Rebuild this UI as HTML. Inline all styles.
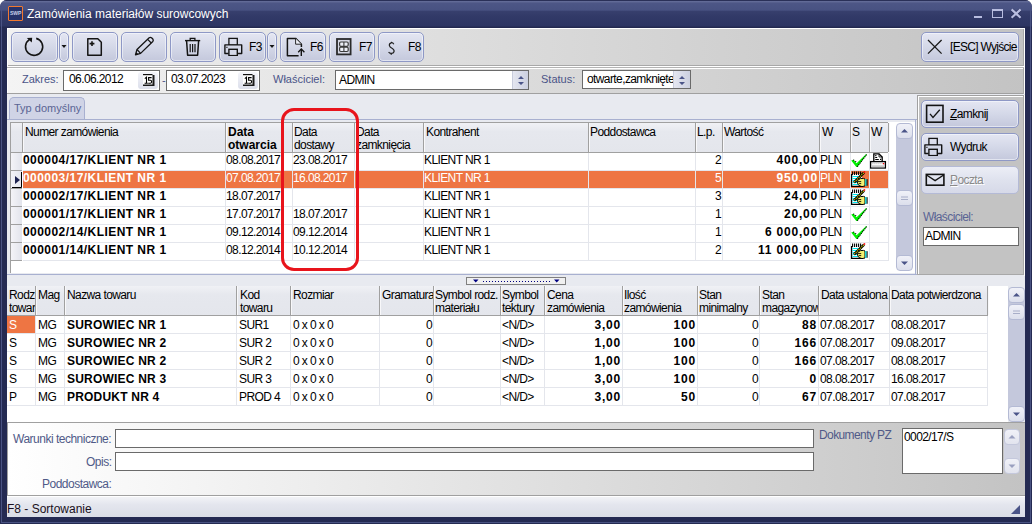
<!DOCTYPE html>
<html><head><meta charset="utf-8"><style>
html,body{margin:0;padding:0;}
body{width:1032px;height:524px;position:relative;overflow:hidden;background:#ffffff;font-family:"Liberation Sans", sans-serif;}
body div, body svg{position:absolute;}
.t{white-space:nowrap;color:#000;font-size:11px;line-height:13px;}
</style></head><body>
<div style="left:0;top:0;width:1032px;height:524px;background:#242a52;border-radius:7px 7px 0 0;"></div>
<div style="left:0;top:0;width:1032px;height:28px;border-radius:7px 7px 0 0;background:linear-gradient(#2a3058 0px,#2a3058 1px,#646d9a 1px,#5f6894 2px,#4d5686 3px,#485282 10px,#373f6d 11.5px,#323a68 16px,#2d3563 26px,#232950 27px,#232950 28px);"></div>
<div style="left:1px;top:6px;width:1px;height:517px;background:#4a5382"></div>
<div style="left:1030px;top:6px;width:1px;height:517px;background:#4a5382"></div>
<div style="left:1px;top:522px;width:1030px;height:1px;background:#4a5382"></div>
<div style="left:8px;top:6px;width:13px;height:13px;border:1.5px solid #f07830;border-radius:1px;background:#26326a;"></div>
<div class="t" style="left:10px;top:11px;font-size:5px;line-height:5px;color:#c8d0e8;font-weight:bold;letter-spacing:0;">SWP</div>
<div class="t" style="left:27px;top:6px;font-size:12px;line-height:16px;color:#ffffff;">Zamówienia materiałów surowcowych</div>
<div style="left:974px;top:16px;width:8px;height:2px;background:#b8bde0"></div>
<div style="left:992px;top:9px;width:11px;height:9px;border:1px solid #b8bde0;border-top-width:2px;box-sizing:border-box;"></div>
<svg style="position:absolute;left:1009px;top:7px" width="14" height="13"><path d="M2.6 2.4 L11.6 10.8 M11.6 2.4 L2.6 10.8" stroke="#1c2048" stroke-width="3.4" stroke-opacity="0.5"/><path d="M2.6 2.4 L11.6 10.8 M11.6 2.4 L2.6 10.8" stroke="#b8bde0" stroke-width="2.2"/></svg>
<div style="left:7px;top:28px;width:1018px;height:489px;background:#e8eaf0"></div>
<div style="left:7px;top:28px;width:1018px;height:38px;background:linear-gradient(90deg,#f2f2f2,#c3c3c3);"></div>
<div style="left:7px;top:28px;width:1018px;height:1px;background:#ffffff"></div>
<div style="left:7px;top:65px;width:1018px;height:1px;background:#a8a8a8"></div>
<div style="left:7px;top:66px;width:1018px;height:1px;background:#ffffff"></div>
<div style="left:1024px;top:28px;width:1px;height:39px;background:#ffffff"></div>
<div style="left:7px;top:28px;width:1px;height:38px;background:#ffffff"></div>
<div style="left:1023px;top:29px;width:1px;height:37px;background:#a8a8a8"></div>
<div style="left:11px;top:32px;width:47px;height:30px;box-sizing:border-box;border:1px solid #8e98c6;border-radius:5px;box-shadow:inset 0 0 0 1px rgba(250,251,255,0.55);background:linear-gradient(#e4e6f2,#d4d8e8 50%,#c4c8dc);"></div>
<div style="left:59px;top:32px;width:10px;height:30px;box-sizing:border-box;border:1px solid #8e98c6;border-radius:5px;box-shadow:inset 0 0 0 1px rgba(250,251,255,0.55);background:linear-gradient(#e4e6f2,#d4d8e8 50%,#c4c8dc);"></div>
<div style="left:72px;top:32px;width:46px;height:30px;box-sizing:border-box;border:1px solid #8e98c6;border-radius:5px;box-shadow:inset 0 0 0 1px rgba(250,251,255,0.55);background:linear-gradient(#e4e6f2,#d4d8e8 50%,#c4c8dc);"></div>
<div style="left:121px;top:32px;width:46px;height:30px;box-sizing:border-box;border:1px solid #8e98c6;border-radius:5px;box-shadow:inset 0 0 0 1px rgba(250,251,255,0.55);background:linear-gradient(#e4e6f2,#d4d8e8 50%,#c4c8dc);"></div>
<div style="left:170px;top:32px;width:46px;height:30px;box-sizing:border-box;border:1px solid #8e98c6;border-radius:5px;box-shadow:inset 0 0 0 1px rgba(250,251,255,0.55);background:linear-gradient(#e4e6f2,#d4d8e8 50%,#c4c8dc);"></div>
<div style="left:219px;top:32px;width:47px;height:30px;box-sizing:border-box;border:1px solid #8e98c6;border-radius:5px;box-shadow:inset 0 0 0 1px rgba(250,251,255,0.55);background:linear-gradient(#e4e6f2,#d4d8e8 50%,#c4c8dc);"></div>
<div style="left:267px;top:32px;width:10px;height:30px;box-sizing:border-box;border:1px solid #8e98c6;border-radius:5px;box-shadow:inset 0 0 0 1px rgba(250,251,255,0.55);background:linear-gradient(#e4e6f2,#d4d8e8 50%,#c4c8dc);"></div>
<div style="left:280px;top:32px;width:46px;height:30px;box-sizing:border-box;border:1px solid #8e98c6;border-radius:5px;box-shadow:inset 0 0 0 1px rgba(250,251,255,0.55);background:linear-gradient(#e4e6f2,#d4d8e8 50%,#c4c8dc);"></div>
<div style="left:329px;top:32px;width:46px;height:30px;box-sizing:border-box;border:1px solid #8e98c6;border-radius:5px;box-shadow:inset 0 0 0 1px rgba(250,251,255,0.55);background:linear-gradient(#e4e6f2,#d4d8e8 50%,#c4c8dc);"></div>
<div style="left:378px;top:32px;width:46px;height:30px;box-sizing:border-box;border:1px solid #8e98c6;border-radius:5px;box-shadow:inset 0 0 0 1px rgba(250,251,255,0.55);background:linear-gradient(#e4e6f2,#d4d8e8 50%,#c4c8dc);"></div>
<div style="left:921px;top:32px;width:98px;height:30px;box-sizing:border-box;border:1px solid #8e98c6;border-radius:5px;box-shadow:inset 0 0 0 1px rgba(250,251,255,0.55);background:linear-gradient(#e4e6f2,#d4d8e8 50%,#c4c8dc);"></div>
<div style="left:7px;top:67px;width:1018px;height:27px;background:linear-gradient(90deg,#f4f4f4,#c3c3c3);"></div>
<div style="left:7px;top:67px;width:1018px;height:1px;background:#b4b4b4"></div>
<div style="left:7px;top:68px;width:1018px;height:1px;background:#ffffff"></div>
<div style="left:7px;top:93px;width:1018px;height:1px;background:#a0a0a0"></div>
<div style="left:1024px;top:67px;width:1px;height:27px;background:#ffffff"></div>
<div style="left:1023px;top:68px;width:1px;height:26px;background:#a8a8a8"></div>
<div style="left:7px;top:68px;width:1px;height:25px;background:#ffffff"></div>
<div class="t" style="left:22px;top:72px;font-size:11px;line-height:14px;color:#4a5488;">Zakres:</div>
<div style="left:63px;top:70px;width:97px;height:21px;box-sizing:border-box;border:1px solid #6a6a6a;background:#ffffff;"></div>
<div style="left:166px;top:70px;width:94px;height:21px;box-sizing:border-box;border:1px solid #6a6a6a;background:#ffffff;"></div>
<div style="left:335px;top:70px;width:194px;height:20px;box-sizing:border-box;border:1px solid #6a6a6a;background:#ffffff;"></div>
<div style="left:582px;top:70px;width:109px;height:19px;box-sizing:border-box;border:1px solid #6a6a6a;background:#ffffff;"></div>
<div class="t" style="left:69px;top:72px;font-size:12px;line-height:14px;letter-spacing:-0.6px;">06.06.2012</div>
<div class="t" style="left:171px;top:72px;font-size:12px;line-height:14px;letter-spacing:-0.6px;">03.07.2023</div>
<div class="t" style="left:162px;top:73px;font-size:11px;line-height:14px;color:#4a5488">-</div>
<div class="t" style="left:273px;top:72px;font-size:11px;line-height:14px;color:#4a5488;">Właściciel:</div>
<div class="t" style="left:339px;top:73px;font-size:12px;line-height:14px;letter-spacing:-0.6px;">ADMIN</div>
<div class="t" style="left:541px;top:72px;font-size:11px;line-height:14px;color:#4a5488;">Status:</div>
<div class="t" style="left:587px;top:72px;font-size:12px;line-height:14px;letter-spacing:-0.6px;width:86px;overflow:hidden;white-space:nowrap;">otwarte,zamknięte</div>
<div style="left:7px;top:94px;width:910px;height:181px;background:#e8eaf0"></div>
<div style="left:917px;top:95px;width:108px;height:180px;background:#c3c3c3"></div>
<div style="left:917px;top:95px;width:1px;height:180px;background:#a0a0a0"></div>
<div style="left:918px;top:96px;width:1px;height:179px;background:#ffffff"></div>
<div style="left:917px;top:95px;width:108px;height:1px;background:#a0a0a0"></div>
<div style="left:918px;top:96px;width:107px;height:1px;background:#ffffff"></div>
<div style="left:1023px;top:96px;width:1px;height:179px;background:#a8a8a8"></div>
<div style="left:917px;top:274px;width:107px;height:1px;background:#a8a8a8"></div>
<div style="left:1024px;top:95px;width:1px;height:181px;background:#ffffff"></div>
<div style="left:9px;top:97px;width:76px;height:23px;box-sizing:border-box;border:1px solid #a8b0d0;border-bottom:none;border-radius:5px 5px 0 0;background:#d0d4e6;"></div>
<div class="t" style="left:14px;top:101px;font-size:11px;line-height:14px;color:#5a6494;">Typ domyślny</div>
<div style="left:7px;top:119px;width:910px;height:1px;background:#a8b0d0"></div>
<div style="left:915px;top:119px;width:1px;height:156px;background:#a8b0d0"></div>
<div style="left:7px;top:274px;width:910px;height:1px;background:#a8b0d0"></div>
<div style="left:10px;top:122px;width:905px;height:151px;background:#ffffff"></div>
<div style="left:10px;top:122px;width:878px;height:1px;background:#a0a0a0"></div>
<div style="left:10px;top:122px;width:1px;height:151px;background:#a0a0a0"></div>
<div style="left:11px;top:123px;width:877px;height:29px;background:linear-gradient(#f0f1f5,#e6e8ee 30%,#e4e6ec);"></div>
<div style="left:10px;top:152px;width:878px;height:1px;background:#a0a0a0"></div>
<div style="left:22px;top:123px;width:1px;height:29px;background:#a0a0a0"></div>
<div style="left:23px;top:123px;width:1px;height:29px;background:#f8f8fa"></div>
<div style="left:225px;top:123px;width:1px;height:29px;background:#a0a0a0"></div>
<div style="left:226px;top:123px;width:1px;height:29px;background:#f8f8fa"></div>
<div style="left:292px;top:123px;width:1px;height:29px;background:#a0a0a0"></div>
<div style="left:293px;top:123px;width:1px;height:29px;background:#f8f8fa"></div>
<div style="left:354px;top:123px;width:1px;height:29px;background:#a0a0a0"></div>
<div style="left:355px;top:123px;width:1px;height:29px;background:#f8f8fa"></div>
<div style="left:423px;top:123px;width:1px;height:29px;background:#a0a0a0"></div>
<div style="left:424px;top:123px;width:1px;height:29px;background:#f8f8fa"></div>
<div style="left:588px;top:123px;width:1px;height:29px;background:#a0a0a0"></div>
<div style="left:589px;top:123px;width:1px;height:29px;background:#f8f8fa"></div>
<div style="left:695px;top:123px;width:1px;height:29px;background:#a0a0a0"></div>
<div style="left:696px;top:123px;width:1px;height:29px;background:#f8f8fa"></div>
<div style="left:722px;top:123px;width:1px;height:29px;background:#a0a0a0"></div>
<div style="left:723px;top:123px;width:1px;height:29px;background:#f8f8fa"></div>
<div style="left:819px;top:123px;width:1px;height:29px;background:#a0a0a0"></div>
<div style="left:820px;top:123px;width:1px;height:29px;background:#f8f8fa"></div>
<div style="left:850px;top:123px;width:1px;height:29px;background:#a0a0a0"></div>
<div style="left:851px;top:123px;width:1px;height:29px;background:#f8f8fa"></div>
<div style="left:869px;top:123px;width:1px;height:29px;background:#a0a0a0"></div>
<div style="left:870px;top:123px;width:1px;height:29px;background:#f8f8fa"></div>
<div style="left:888px;top:123px;width:1px;height:29px;background:#a0a0a0"></div>
<div style="left:889px;top:123px;width:1px;height:29px;background:#f8f8fa"></div>
<div style="left:23px;top:170px;width:865px;height:1px;background:#e4e6ec"></div>
<div style="left:11px;top:153px;width:11px;height:17px;background:linear-gradient(90deg,#f4f4f8,#e2e4ec);"></div>
<div style="left:11px;top:170px;width:11px;height:1px;background:#a0a0a0"></div>
<div style="left:23px;top:188px;width:865px;height:1px;background:#e4e6ec"></div>
<div style="left:11px;top:171px;width:11px;height:17px;background:linear-gradient(90deg,#f4f4f8,#e2e4ec);"></div>
<div style="left:11px;top:188px;width:11px;height:1px;background:#a0a0a0"></div>
<div style="left:23px;top:206px;width:865px;height:1px;background:#e4e6ec"></div>
<div style="left:11px;top:189px;width:11px;height:17px;background:linear-gradient(90deg,#f4f4f8,#e2e4ec);"></div>
<div style="left:11px;top:206px;width:11px;height:1px;background:#a0a0a0"></div>
<div style="left:23px;top:224px;width:865px;height:1px;background:#e4e6ec"></div>
<div style="left:11px;top:207px;width:11px;height:17px;background:linear-gradient(90deg,#f4f4f8,#e2e4ec);"></div>
<div style="left:11px;top:224px;width:11px;height:1px;background:#a0a0a0"></div>
<div style="left:23px;top:242px;width:865px;height:1px;background:#e4e6ec"></div>
<div style="left:11px;top:225px;width:11px;height:17px;background:linear-gradient(90deg,#f4f4f8,#e2e4ec);"></div>
<div style="left:11px;top:242px;width:11px;height:1px;background:#a0a0a0"></div>
<div style="left:23px;top:260px;width:865px;height:1px;background:#e4e6ec"></div>
<div style="left:11px;top:243px;width:11px;height:17px;background:linear-gradient(90deg,#f4f4f8,#e2e4ec);"></div>
<div style="left:11px;top:260px;width:11px;height:1px;background:#a0a0a0"></div>
<div style="left:225px;top:153px;width:1px;height:108px;background:#e4e6ec"></div>
<div style="left:292px;top:153px;width:1px;height:108px;background:#e4e6ec"></div>
<div style="left:354px;top:153px;width:1px;height:108px;background:#e4e6ec"></div>
<div style="left:423px;top:153px;width:1px;height:108px;background:#e4e6ec"></div>
<div style="left:588px;top:153px;width:1px;height:108px;background:#e4e6ec"></div>
<div style="left:695px;top:153px;width:1px;height:108px;background:#e4e6ec"></div>
<div style="left:722px;top:153px;width:1px;height:108px;background:#e4e6ec"></div>
<div style="left:819px;top:153px;width:1px;height:108px;background:#e4e6ec"></div>
<div style="left:850px;top:153px;width:1px;height:108px;background:#e4e6ec"></div>
<div style="left:869px;top:153px;width:1px;height:108px;background:#e4e6ec"></div>
<div style="left:888px;top:153px;width:1px;height:108px;background:#e4e6ec"></div>
<div style="left:23px;top:171px;width:865px;height:17px;background:#ee7543"></div>
<div style="left:225px;top:171px;width:1px;height:17px;background:#e4e6ec"></div>
<div style="left:292px;top:171px;width:1px;height:17px;background:#e4e6ec"></div>
<div style="left:354px;top:171px;width:1px;height:17px;background:#e4e6ec"></div>
<div style="left:423px;top:171px;width:1px;height:17px;background:#e4e6ec"></div>
<div style="left:588px;top:171px;width:1px;height:17px;background:#e4e6ec"></div>
<div style="left:695px;top:171px;width:1px;height:17px;background:#e4e6ec"></div>
<div style="left:722px;top:171px;width:1px;height:17px;background:#e4e6ec"></div>
<div style="left:819px;top:171px;width:1px;height:17px;background:#e4e6ec"></div>
<div style="left:850px;top:171px;width:1px;height:17px;background:#e4e6ec"></div>
<div style="left:869px;top:171px;width:1px;height:17px;background:#e4e6ec"></div>
<div style="left:888px;top:171px;width:1px;height:17px;background:#e4e6ec"></div>
<svg style="left:11px;top:171px" width="12" height="18"><path d="M4 5 L9 9 L4 13 Z" fill="#1c2250"/><path d="M10.5 1 V16.5 H1" stroke="#000" fill="none" stroke-width="1"/></svg>
<div class="t" style="left:25px;top:126px;font-size:12px;line-height:13px;letter-spacing:-0.6px;">Numer zamówienia</div>
<div class="t" style="left:228px;top:126px;font-size:12px;line-height:13px;letter-spacing:-0.6px;font-weight:bold;letter-spacing:0px;">Data<br>otwarcia</div>
<div class="t" style="left:294px;top:126px;font-size:12px;line-height:13px;letter-spacing:-0.6px;">Data<br>dostawy</div>
<div class="t" style="left:356px;top:126px;font-size:12px;line-height:13px;letter-spacing:-0.6px;width:66px;overflow:hidden;">Data<br>zamknięcia</div>
<div class="t" style="left:426px;top:126px;font-size:12px;line-height:13px;letter-spacing:-0.6px;">Kontrahent</div>
<div class="t" style="left:590px;top:126px;font-size:12px;line-height:13px;letter-spacing:-0.6px;">Poddostawca</div>
<div class="t" style="left:697px;top:126px;font-size:12px;line-height:13px;letter-spacing:-0.6px;">L.p.</div>
<div class="t" style="left:724px;top:126px;font-size:12px;line-height:13px;letter-spacing:-0.6px;">Wartość</div>
<div class="t" style="left:822px;top:126px;font-size:12px;line-height:13px;letter-spacing:-0.6px;">W</div>
<div class="t" style="left:852px;top:126px;font-size:12px;line-height:13px;letter-spacing:-0.6px;">S</div>
<div class="t" style="left:871px;top:126px;font-size:12px;line-height:13px;letter-spacing:-0.6px;">W</div>
<div class="t" style="left:23px;top:154px;font-size:12px;line-height:13px;font-weight:bold;letter-spacing:0.45px;">000004/17/KLIENT NR 1</div>
<div class="t" style="left:226px;top:154px;font-size:12px;line-height:13px;letter-spacing:-0.6px;">08.08.2017</div>
<div class="t" style="left:293px;top:154px;font-size:12px;line-height:13px;letter-spacing:-0.6px;">23.08.2017</div>
<div class="t" style="left:424px;top:154px;font-size:12px;line-height:13px;letter-spacing:-0.6px;">KLIENT NR 1</div>
<div class="t" style="left:697px;top:154px;font-size:12px;line-height:13px;letter-spacing:-0.6px;width:24px;text-align:right;">2</div>
<div class="t" style="left:723px;top:154px;font-size:12px;line-height:13px;font-weight:bold;letter-spacing:0.45px;width:95px;text-align:right;letter-spacing:0.8px;">400,00</div>
<div class="t" style="left:820px;top:154px;font-size:12px;line-height:13px;letter-spacing:-0.6px;">PLN</div>
<div class="t" style="left:23px;top:172px;font-size:12px;line-height:13px;font-weight:bold;letter-spacing:0.45px;color:#ffffff;">000003/17/KLIENT NR 1</div>
<div class="t" style="left:226px;top:172px;font-size:12px;line-height:13px;letter-spacing:-0.6px;color:#ffffff;">07.08.2017</div>
<div class="t" style="left:293px;top:172px;font-size:12px;line-height:13px;letter-spacing:-0.6px;color:#ffffff;">16.08.2017</div>
<div class="t" style="left:424px;top:172px;font-size:12px;line-height:13px;letter-spacing:-0.6px;color:#ffffff;">KLIENT NR 1</div>
<div class="t" style="left:697px;top:172px;font-size:12px;line-height:13px;letter-spacing:-0.6px;color:#ffffff;width:24px;text-align:right;">5</div>
<div class="t" style="left:723px;top:172px;font-size:12px;line-height:13px;font-weight:bold;letter-spacing:0.45px;color:#ffffff;width:95px;text-align:right;letter-spacing:0.8px;">950,00</div>
<div class="t" style="left:820px;top:172px;font-size:12px;line-height:13px;letter-spacing:-0.6px;color:#ffffff;">PLN</div>
<div class="t" style="left:23px;top:190px;font-size:12px;line-height:13px;font-weight:bold;letter-spacing:0.45px;">000002/17/KLIENT NR 1</div>
<div class="t" style="left:226px;top:190px;font-size:12px;line-height:13px;letter-spacing:-0.6px;">18.07.2017</div>
<div class="t" style="left:293px;top:190px;font-size:12px;line-height:13px;letter-spacing:-0.6px;"></div>
<div class="t" style="left:424px;top:190px;font-size:12px;line-height:13px;letter-spacing:-0.6px;">KLIENT NR 1</div>
<div class="t" style="left:697px;top:190px;font-size:12px;line-height:13px;letter-spacing:-0.6px;width:24px;text-align:right;">3</div>
<div class="t" style="left:723px;top:190px;font-size:12px;line-height:13px;font-weight:bold;letter-spacing:0.45px;width:95px;text-align:right;letter-spacing:0.8px;">24,00</div>
<div class="t" style="left:820px;top:190px;font-size:12px;line-height:13px;letter-spacing:-0.6px;">PLN</div>
<div class="t" style="left:23px;top:208px;font-size:12px;line-height:13px;font-weight:bold;letter-spacing:0.45px;">000001/17/KLIENT NR 1</div>
<div class="t" style="left:226px;top:208px;font-size:12px;line-height:13px;letter-spacing:-0.6px;">17.07.2017</div>
<div class="t" style="left:293px;top:208px;font-size:12px;line-height:13px;letter-spacing:-0.6px;">18.07.2017</div>
<div class="t" style="left:424px;top:208px;font-size:12px;line-height:13px;letter-spacing:-0.6px;">KLIENT NR 1</div>
<div class="t" style="left:697px;top:208px;font-size:12px;line-height:13px;letter-spacing:-0.6px;width:24px;text-align:right;">1</div>
<div class="t" style="left:723px;top:208px;font-size:12px;line-height:13px;font-weight:bold;letter-spacing:0.45px;width:95px;text-align:right;letter-spacing:0.8px;">20,00</div>
<div class="t" style="left:820px;top:208px;font-size:12px;line-height:13px;letter-spacing:-0.6px;">PLN</div>
<div class="t" style="left:23px;top:226px;font-size:12px;line-height:13px;font-weight:bold;letter-spacing:0.45px;">000002/14/KLIENT NR 1</div>
<div class="t" style="left:226px;top:226px;font-size:12px;line-height:13px;letter-spacing:-0.6px;">09.12.2014</div>
<div class="t" style="left:293px;top:226px;font-size:12px;line-height:13px;letter-spacing:-0.6px;">09.12.2014</div>
<div class="t" style="left:424px;top:226px;font-size:12px;line-height:13px;letter-spacing:-0.6px;">KLIENT NR 1</div>
<div class="t" style="left:697px;top:226px;font-size:12px;line-height:13px;letter-spacing:-0.6px;width:24px;text-align:right;">1</div>
<div class="t" style="left:723px;top:226px;font-size:12px;line-height:13px;font-weight:bold;letter-spacing:0.45px;width:95px;text-align:right;letter-spacing:0.8px;">6 000,00</div>
<div class="t" style="left:820px;top:226px;font-size:12px;line-height:13px;letter-spacing:-0.6px;">PLN</div>
<div class="t" style="left:23px;top:244px;font-size:12px;line-height:13px;font-weight:bold;letter-spacing:0.45px;">000001/14/KLIENT NR 1</div>
<div class="t" style="left:226px;top:244px;font-size:12px;line-height:13px;letter-spacing:-0.6px;">08.12.2014</div>
<div class="t" style="left:293px;top:244px;font-size:12px;line-height:13px;letter-spacing:-0.6px;">10.12.2014</div>
<div class="t" style="left:424px;top:244px;font-size:12px;line-height:13px;letter-spacing:-0.6px;">KLIENT NR 1</div>
<div class="t" style="left:697px;top:244px;font-size:12px;line-height:13px;letter-spacing:-0.6px;width:24px;text-align:right;">2</div>
<div class="t" style="left:723px;top:244px;font-size:12px;line-height:13px;font-weight:bold;letter-spacing:0.45px;width:95px;text-align:right;letter-spacing:0.8px;">11 000,00</div>
<div class="t" style="left:820px;top:244px;font-size:12px;line-height:13px;letter-spacing:-0.6px;">PLN</div>
<svg style="left:20px;top:34px" width="30" height="26" viewBox="0 0 30 26"><path d="M16.2 4.4 A8.6 8.6 0 1 1 9.3 5.6" fill="none" stroke="#141414" stroke-width="1.6"/><path d="M6.8 4.1 L12.2 3.8 L11.8 8.6 Z" fill="#141414"/></svg>
<svg style="left:59px;top:44px" width="10" height="5" viewBox="0 0 10 5"><path d="M2.5 1 L7.5 1 L5 4 Z" fill="#141414"/></svg>
<svg style="left:267px;top:44px" width="10" height="5" viewBox="0 0 10 5"><path d="M2.5 1 L7.5 1 L5 4 Z" fill="#141414"/></svg>
<svg style="left:84px;top:36px" width="22" height="22" viewBox="0 0 22 22"><path d="M3.8 2.8 H13.8 L17.3 6.3 V19.2 H3.8 Z" fill="none" stroke="#141414" stroke-width="1.5" stroke-linejoin="round"/><path d="M8 5.2 V10 M5.6 7.6 H10.4" stroke="#141414" stroke-width="1.6"/></svg>
<svg style="left:131px;top:35px" width="26" height="24" viewBox="0 0 26 24"><path d="M4.5 19.8 L6 14.5 L18.2 2.8 Q19.5 1.8 20.8 3 L21.8 4 Q22.8 5.3 21.8 6.5 L9.6 18.4 Z" fill="none" stroke="#141414" stroke-width="1.3" stroke-linejoin="round"/><path d="M6 14.5 L9.6 18.4 M16.6 4.4 L20.3 8" stroke="#141414" stroke-width="1.2"/><path d="M4.5 19.8 L5.3 17.2 L7.2 19 Z" fill="#141414"/></svg>
<svg style="left:183px;top:36px" width="20" height="22" viewBox="0 0 20 22"><path d="M2 4.6 H17.2" stroke="#141414" stroke-width="1.4"/><path d="M7.2 4.2 V2.4 H11.9 V4.2" fill="none" stroke="#141414" stroke-width="1.3"/><path d="M3.6 5 L4.6 19.2 H14.6 L15.6 5" fill="none" stroke="#141414" stroke-width="1.5" stroke-linejoin="round"/><path d="M7.2 8 V16.2 M9.6 8 V16.2 M12 8 V16.2" stroke="#141414" stroke-width="1.2"/></svg>
<svg style="left:224px;top:36px" width="20" height="20" viewBox="0 0 20 20"><rect x="4.9" y="2.4" width="8.4" height="6.8" fill="none" stroke="#141414" stroke-width="1.3"/><path d="M4.6 17.5 H0.9 V8.9 H17.7 V17.5 H13.6" fill="#d4d8e8" stroke="#141414" stroke-width="1.4" stroke-linejoin="round"/><rect x="4.9" y="13.3" width="8.4" height="6.3" fill="#d4d8e8" stroke="#141414" stroke-width="1.4"/><rect x="2.2" y="10.8" width="1.4" height="1" fill="#141414"/></svg>
<svg style="left:285px;top:36px" width="22" height="22" viewBox="0 0 22 22"><path d="M13.6 19.7 H2.4 V2.4 H10.6 L16.4 8.2 V11" fill="none" stroke="#141414" stroke-width="1.5" stroke-linejoin="round"/><path d="M10.6 2.4 V8.2 H16.4" fill="#eef0f8" stroke="#141414" stroke-width="0.9"/><path d="M16.3 20 V13.6" stroke="#141414" stroke-width="1.4"/><path d="M13.2 16.2 L16.3 13 L19.4 16.2" fill="none" stroke="#141414" stroke-width="1.3"/></svg>
<svg style="left:334px;top:36px" width="20" height="22" viewBox="0 0 20 22"><rect x="3" y="3" width="13.6" height="15.4" fill="#d6d8e4" stroke="#2a2a2a" stroke-width="1.8"/><rect x="5.6" y="6" width="8.6" height="4.3" rx="1.2" fill="#eceef6" stroke="#3a3a3a" stroke-width="1.2"/><rect x="5.6" y="11.2" width="8.6" height="4.3" rx="1.2" fill="#eceef6" stroke="#3a3a3a" stroke-width="1.2"/><path d="M9.9 6 V15.5" stroke="#3a3a3a" stroke-width="1.1"/></svg>
<svg style="left:386px;top:40px" width="12" height="16" viewBox="0 0 12 16"><path d="M7.8 4.2 Q6.8 2.4 5.2 2.8 Q3 3.4 3.4 5.6 Q3.8 7.2 6 8.2 Q8.6 9.6 8 11.8 Q7.4 13.6 5 13.4 Q3.4 13.2 2.6 12" fill="none" stroke="#202020" stroke-width="1.2"/><path d="M5.5 1.8 V3 M5.2 13.6 V15" stroke="#202020" stroke-width="1"/></svg>
<svg style="left:925px;top:38px" width="20" height="18" viewBox="0 0 20 18"><path d="M3 2 L16.6 15.6 M16.6 2 L3 15.6" stroke="#1a1a1a" stroke-width="1.3"/></svg>
<div class="t" style="left:249px;top:41px;font-size:12px;line-height:13px;color:#000;letter-spacing:-0.6px;">F3</div>
<div class="t" style="left:310px;top:41px;font-size:12px;line-height:13px;color:#000;letter-spacing:-0.6px;">F6</div>
<div class="t" style="left:359px;top:41px;font-size:12px;line-height:13px;color:#000;letter-spacing:-0.6px;">F7</div>
<div class="t" style="left:408px;top:41px;font-size:12px;line-height:13px;color:#000;letter-spacing:-0.6px;">F8</div>
<div class="t" style="left:950px;top:41px;font-size:12px;line-height:13px;color:#000;letter-spacing:-0.6px;letter-spacing:-0.7px;">[ESC] Wyjście</div>
<div style="left:921px;top:100px;width:98px;height:28px;box-sizing:border-box;border:1px solid #8e98c6;border-radius:5px;box-shadow:inset 0 0 0 1px rgba(250,251,255,0.55);background:linear-gradient(#e4e6f2,#d4d8e8 50%,#c4c8dc);"></div>
<div style="left:921px;top:133px;width:98px;height:28px;box-sizing:border-box;border:1px solid #8e98c6;border-radius:5px;box-shadow:inset 0 0 0 1px rgba(250,251,255,0.55);background:linear-gradient(#e4e6f2,#d4d8e8 50%,#c4c8dc);"></div>
<div style="left:921px;top:166px;width:98px;height:28px;box-sizing:border-box;border:1px solid #b4bad6;border-radius:5px;background:linear-gradient(#eceef6,#dfe2ee 50%,#d6d9e8);"></div>
<svg style="left:924px;top:103px" width="22" height="22" viewBox="0 0 22 22"><rect x="2.6" y="2.4" width="16.4" height="16.8" fill="none" stroke="#141414" stroke-width="1.6"/><path d="M6 10.8 L9 14.4 L15.8 6.8" fill="none" stroke="#141414" stroke-width="1.3"/></svg>
<svg style="left:924px;top:136px" width="20" height="20" viewBox="0 0 20 20"><rect x="4.9" y="2.4" width="8.4" height="6.8" fill="none" stroke="#141414" stroke-width="1.3"/><path d="M4.6 17.5 H0.9 V8.9 H17.7 V17.5 H13.6" fill="#d4d8e8" stroke="#141414" stroke-width="1.4" stroke-linejoin="round"/><rect x="4.9" y="13.3" width="8.4" height="6.3" fill="#d4d8e8" stroke="#141414" stroke-width="1.4"/><rect x="2.2" y="10.8" width="1.4" height="1" fill="#141414"/></svg>
<svg style="left:924px;top:171px" width="22" height="18" viewBox="0 0 22 18"><rect x="2.3" y="3.4" width="17.6" height="10.8" fill="none" stroke="#141414" stroke-width="1.6"/><path d="M2.5 4 L11.1 9.6 L19.7 4" fill="none" stroke="#141414" stroke-width="1.3"/></svg>
<div class="t" style="left:950px;top:108px;font-size:12px;line-height:13px;letter-spacing:-0.6px;"><u>Z</u>amknij</div>
<div class="t" style="left:950px;top:141px;font-size:12px;line-height:13px;letter-spacing:-0.6px;">Wydruk</div>
<div class="t" style="left:950px;top:174px;font-size:12px;line-height:13px;letter-spacing:-0.6px;color:#8a8a8a;text-shadow:1px 1px 0 #ffffff;"><u>P</u>oczta</div>
<div class="t" style="left:923px;top:211px;font-size:12px;line-height:13px;letter-spacing:-0.6px;color:#5a6494;">Właściciel:</div>
<div style="left:923px;top:227px;width:96px;height:19px;box-sizing:border-box;border:1px solid #6a6a6a;background:#ffffff;"></div>
<div class="t" style="left:925px;top:230px;font-size:12px;line-height:13px;letter-spacing:-0.6px;">ADMIN</div>
<div style="left:138px;top:72px;width:20px;height:17px;box-sizing:border-box;border-radius:3px;background:linear-gradient(#f4f5fa,#dcdfeb);"></div>
<svg style="left:138px;top:72px" width="20" height="17" viewBox="0 0 20 17"><rect x="5" y="3" width="9.5" height="9.5" fill="#ffffff"/><path d="M5 2 H14.5 V3.2 H5 Z" fill="#101010"/><path d="M14.5 3 H16.5 V14 H5 V12.5 H14.5 Z" fill="#1a1a1a"/><path d="M6.8 6.6 L8.5 5.2 V11.3 M6.6 11.3 H9.8" fill="none" stroke="#000" stroke-width="1.1"/><path d="M13.6 5.6 H10.6 V8.3 H12.4 Q13.6 8.3 13.6 9.8 Q13.6 11.3 12.2 11.3 H10.2" fill="none" stroke="#000" stroke-width="1.1"/></svg>
<div style="left:238px;top:72px;width:20px;height:17px;box-sizing:border-box;border-radius:3px;background:linear-gradient(#f4f5fa,#dcdfeb);"></div>
<svg style="left:238px;top:72px" width="20" height="17" viewBox="0 0 20 17"><rect x="5" y="3" width="9.5" height="9.5" fill="#ffffff"/><path d="M5 2 H14.5 V3.2 H5 Z" fill="#101010"/><path d="M14.5 3 H16.5 V14 H5 V12.5 H14.5 Z" fill="#1a1a1a"/><path d="M6.8 6.6 L8.5 5.2 V11.3 M6.6 11.3 H9.8" fill="none" stroke="#000" stroke-width="1.1"/><path d="M13.6 5.6 H10.6 V8.3 H12.4 Q13.6 8.3 13.6 9.8 Q13.6 11.3 12.2 11.3 H10.2" fill="none" stroke="#000" stroke-width="1.1"/></svg>
<div style="left:512px;top:71px;width:16px;height:18px;background:linear-gradient(90deg,#e4e6f0,#ccd0e0);border-left:1px solid #c8ccdc;box-sizing:border-box;"></div>
<svg style="left:516px;top:74px" width="10" height="13" viewBox="0 0 10 13"><path d="M2 5 L5 2 L8 5 Z M2 8 L5 11 L8 8 Z" fill="#4a5488"/></svg>
<div style="left:673px;top:71px;width:17px;height:17px;background:linear-gradient(90deg,#e4e6f0,#ccd0e0);border-left:1px solid #c8ccdc;box-sizing:border-box;"></div>
<svg style="left:677px;top:74px" width="10" height="13" viewBox="0 0 10 13"><path d="M2 5 L5 2 L8 5 Z M2 8 L5 11 L8 8 Z" fill="#4a5488"/></svg>
<svg style="left:849px;top:151px" width="20" height="20" viewBox="0 0 20 20"><path d="M2.2 9.4 L4.6 8.8 L7.6 12.2 L17.2 3 L17.9 3.6 L8.4 16 L7.3 16 Z" fill="#00f000"/><path d="M8.3 15.6 L17.6 3.6" stroke="#000" stroke-width="1.1" stroke-dasharray="1.1 0.9"/><rect x="4.2" y="8.6" width="1" height="1" fill="#000"/><rect x="6.2" y="10" width="1" height="1" fill="#000"/></svg>
<svg style="left:849px;top:169px" width="20" height="20" viewBox="0 0 20 20"><rect x="2.5" y="5" width="10.5" height="12.5" fill="#ffffff"/><path d="M2.6 5 V17.4 H13" fill="none" stroke="#000" stroke-width="1.3"/><path d="M3.6 2.6 V6 M5.6 2.6 V6 M7.6 2.6 V6 M9.6 2.6 V6 M11.6 2.6 V6" stroke="#000" stroke-width="1.1"/><path d="M3.5 7.5 H9 M3.5 9.5 H8 M3.5 11.5 H7 M3.5 13.5 H8 M3.5 15.5 H9.5" stroke="#00e8f0" stroke-width="1"/><path d="M5 13.5 L15 3.6" stroke="#000" stroke-width="2.6"/><path d="M5.4 13.1 L14.8 3.8" stroke="#ffff00" stroke-width="1.1" stroke-dasharray="1 1"/><rect x="14.6" y="2.2" width="1.6" height="1.6" fill="#ff0000"/><path d="M8.2 11.6 L11.5 9.6 L14.5 9.4 L16 10 L16 17 L13 17.6 L10 16.6 L8.6 14.6 Z" fill="#f4f070" stroke="#000" stroke-width="1"/><path d="M8.8 12.6 H12.2 M9.6 14.6 H12.2" stroke="#000" stroke-width="0.9"/><rect x="16.2" y="10" width="1.4" height="6.8" fill="#00e8f0"/><path d="M18.1 10.2 V16.8" stroke="#000" stroke-width="1"/></svg>
<svg style="left:849px;top:187px" width="20" height="20" viewBox="0 0 20 20"><rect x="2.5" y="5" width="10.5" height="12.5" fill="#ffffff"/><path d="M2.6 5 V17.4 H13" fill="none" stroke="#000" stroke-width="1.3"/><path d="M3.6 2.6 V6 M5.6 2.6 V6 M7.6 2.6 V6 M9.6 2.6 V6 M11.6 2.6 V6" stroke="#000" stroke-width="1.1"/><path d="M3.5 7.5 H9 M3.5 9.5 H8 M3.5 11.5 H7 M3.5 13.5 H8 M3.5 15.5 H9.5" stroke="#00e8f0" stroke-width="1"/><path d="M5 13.5 L15 3.6" stroke="#000" stroke-width="2.6"/><path d="M5.4 13.1 L14.8 3.8" stroke="#ffff00" stroke-width="1.1" stroke-dasharray="1 1"/><rect x="14.6" y="2.2" width="1.6" height="1.6" fill="#ff0000"/><path d="M8.2 11.6 L11.5 9.6 L14.5 9.4 L16 10 L16 17 L13 17.6 L10 16.6 L8.6 14.6 Z" fill="#f4f070" stroke="#000" stroke-width="1"/><path d="M8.8 12.6 H12.2 M9.6 14.6 H12.2" stroke="#000" stroke-width="0.9"/><rect x="16.2" y="10" width="1.4" height="6.8" fill="#00e8f0"/><path d="M18.1 10.2 V16.8" stroke="#000" stroke-width="1"/></svg>
<svg style="left:849px;top:205px" width="20" height="20" viewBox="0 0 20 20"><path d="M2.2 9.4 L4.6 8.8 L7.6 12.2 L17.2 3 L17.9 3.6 L8.4 16 L7.3 16 Z" fill="#00f000"/><path d="M8.3 15.6 L17.6 3.6" stroke="#000" stroke-width="1.1" stroke-dasharray="1.1 0.9"/><rect x="4.2" y="8.6" width="1" height="1" fill="#000"/><rect x="6.2" y="10" width="1" height="1" fill="#000"/></svg>
<svg style="left:849px;top:223px" width="20" height="20" viewBox="0 0 20 20"><path d="M2.2 9.4 L4.6 8.8 L7.6 12.2 L17.2 3 L17.9 3.6 L8.4 16 L7.3 16 Z" fill="#00f000"/><path d="M8.3 15.6 L17.6 3.6" stroke="#000" stroke-width="1.1" stroke-dasharray="1.1 0.9"/><rect x="4.2" y="8.6" width="1" height="1" fill="#000"/><rect x="6.2" y="10" width="1" height="1" fill="#000"/></svg>
<svg style="left:849px;top:241px" width="20" height="20" viewBox="0 0 20 20"><rect x="2.5" y="5" width="10.5" height="12.5" fill="#ffffff"/><path d="M2.6 5 V17.4 H13" fill="none" stroke="#000" stroke-width="1.3"/><path d="M3.6 2.6 V6 M5.6 2.6 V6 M7.6 2.6 V6 M9.6 2.6 V6 M11.6 2.6 V6" stroke="#000" stroke-width="1.1"/><path d="M3.5 7.5 H9 M3.5 9.5 H8 M3.5 11.5 H7 M3.5 13.5 H8 M3.5 15.5 H9.5" stroke="#00e8f0" stroke-width="1"/><path d="M5 13.5 L15 3.6" stroke="#000" stroke-width="2.6"/><path d="M5.4 13.1 L14.8 3.8" stroke="#ffff00" stroke-width="1.1" stroke-dasharray="1 1"/><rect x="14.6" y="2.2" width="1.6" height="1.6" fill="#ff0000"/><path d="M8.2 11.6 L11.5 9.6 L14.5 9.4 L16 10 L16 17 L13 17.6 L10 16.6 L8.6 14.6 Z" fill="#f4f070" stroke="#000" stroke-width="1"/><path d="M8.8 12.6 H12.2 M9.6 14.6 H12.2" stroke="#000" stroke-width="0.9"/><rect x="16.2" y="10" width="1.4" height="6.8" fill="#00e8f0"/><path d="M18.1 10.2 V16.8" stroke="#000" stroke-width="1"/></svg>
<svg style="left:868px;top:151px" width="20" height="20" viewBox="0 0 20 20"><path d="M5.8 2.8 H11 L14.2 6 V10.6 H5.8 Z" fill="#fff" stroke="#000" stroke-width="1.3"/><path d="M11 2.8 V6 H14.2" fill="none" stroke="#000" stroke-width="0.8"/><rect x="7.2" y="4" width="1.2" height="1.2" fill="#000"/><rect x="7.2" y="6" width="2" height="1" fill="#000"/><rect x="7.2" y="8" width="3.6" height="1" fill="#000"/><rect x="12" y="7.8" width="1.2" height="1.2" fill="#000"/><rect x="2.6" y="10.6" width="14.8" height="6.4" fill="#fff" stroke="#000" stroke-width="1.3"/><path d="M3.6 12.6 H14.6" stroke="#c0c0c0" stroke-width="1.4" stroke-dasharray="1 1"/><rect x="14.9" y="12" width="1.3" height="1.3" fill="#ff0000"/><rect x="3.3" y="14.3" width="13.4" height="2" fill="#c8c8c8"/></svg>
<div style="left:281px;top:108px;width:78px;height:163px;box-sizing:border-box;border:3px solid #e8141c;border-radius:13px;"></div>
<div style="left:896px;top:131px;width:17px;height:132px;background:#c4c8dc;"></div>
<div style="left:896px;top:123px;width:17px;height:16px;box-sizing:border-box;border:1px solid #b4bad4;border-radius:4px;background:linear-gradient(#f0f1f8,#dcdfec);"></div>
<svg style="left:896px;top:123px" width="17" height="16" viewBox="0 0 17 16"><path d="M5.0 9.5 L8.5 6.0 L12.0 9.5 Z" fill="#4a5488"/></svg>
<div style="left:896px;top:255px;width:17px;height:16px;box-sizing:border-box;border:1px solid #b4bad4;border-radius:4px;background:linear-gradient(#f0f1f8,#dcdfec);"></div>
<svg style="left:896px;top:255px" width="17" height="16" viewBox="0 0 17 16"><path d="M5.0 6.5 L8.5 10.0 L12.0 6.5 Z" fill="#4a5488"/></svg>
<div style="left:896px;top:190px;width:17px;height:16px;box-sizing:border-box;border:1px solid #b4bad4;border-radius:4px;background:linear-gradient(#f0f1f8,#dcdfec);"></div>
<svg style="left:896px;top:190px" width="17" height="16" viewBox="0 0 17 16"><path d="M5.0 7.0 H12.0 M5.0 9.5 H12.0" stroke="#a8aec8" stroke-width="1"/></svg>
<div style="left:466px;top:277px;width:100px;height:8px;box-sizing:border-box;border:1px solid #808080;background:#f0f0f0;"></div>
<svg style="left:466px;top:277px" width="100" height="8" viewBox="0 0 100 8"><path d="M7 2.5 H12.5 L9.75 5.5 Z M88 2.5 H93.5 L90.75 5.5 Z" fill="#000080"/><path d="M17 4.5 H85" stroke="#000080" stroke-width="1" stroke-dasharray="1 2"/></svg>
<div style="left:7px;top:286px;width:1001px;height:136px;background:#ffffff"></div>
<div style="left:7px;top:286px;width:981px;height:29px;background:linear-gradient(#f0f1f5,#e6e8ee 30%,#e4e6ec);"></div>
<div style="left:7px;top:315px;width:981px;height:1px;background:#a0a0a0"></div>
<div style="left:35px;top:286px;width:1px;height:29px;background:#a0a0a0"></div>
<div style="left:36px;top:286px;width:1px;height:29px;background:#f8f8fa"></div>
<div style="left:64px;top:286px;width:1px;height:29px;background:#a0a0a0"></div>
<div style="left:65px;top:286px;width:1px;height:29px;background:#f8f8fa"></div>
<div style="left:236px;top:286px;width:1px;height:29px;background:#a0a0a0"></div>
<div style="left:237px;top:286px;width:1px;height:29px;background:#f8f8fa"></div>
<div style="left:290px;top:286px;width:1px;height:29px;background:#a0a0a0"></div>
<div style="left:291px;top:286px;width:1px;height:29px;background:#f8f8fa"></div>
<div style="left:379px;top:286px;width:1px;height:29px;background:#a0a0a0"></div>
<div style="left:380px;top:286px;width:1px;height:29px;background:#f8f8fa"></div>
<div style="left:433px;top:286px;width:1px;height:29px;background:#a0a0a0"></div>
<div style="left:434px;top:286px;width:1px;height:29px;background:#f8f8fa"></div>
<div style="left:500px;top:286px;width:1px;height:29px;background:#a0a0a0"></div>
<div style="left:501px;top:286px;width:1px;height:29px;background:#f8f8fa"></div>
<div style="left:544px;top:286px;width:1px;height:29px;background:#a0a0a0"></div>
<div style="left:545px;top:286px;width:1px;height:29px;background:#f8f8fa"></div>
<div style="left:622px;top:286px;width:1px;height:29px;background:#a0a0a0"></div>
<div style="left:623px;top:286px;width:1px;height:29px;background:#f8f8fa"></div>
<div style="left:697px;top:286px;width:1px;height:29px;background:#a0a0a0"></div>
<div style="left:698px;top:286px;width:1px;height:29px;background:#f8f8fa"></div>
<div style="left:759px;top:286px;width:1px;height:29px;background:#a0a0a0"></div>
<div style="left:760px;top:286px;width:1px;height:29px;background:#f8f8fa"></div>
<div style="left:818px;top:286px;width:1px;height:29px;background:#a0a0a0"></div>
<div style="left:819px;top:286px;width:1px;height:29px;background:#f8f8fa"></div>
<div style="left:889px;top:286px;width:1px;height:29px;background:#a0a0a0"></div>
<div style="left:890px;top:286px;width:1px;height:29px;background:#f8f8fa"></div>
<div style="left:987px;top:286px;width:1px;height:29px;background:#a0a0a0"></div>
<div style="left:988px;top:286px;width:1px;height:29px;background:#f8f8fa"></div>
<div style="left:7px;top:333px;width:981px;height:1px;background:#e4e6ec"></div>
<div style="left:7px;top:351px;width:981px;height:1px;background:#e4e6ec"></div>
<div style="left:7px;top:369px;width:981px;height:1px;background:#e4e6ec"></div>
<div style="left:7px;top:387px;width:981px;height:1px;background:#e4e6ec"></div>
<div style="left:7px;top:405px;width:981px;height:1px;background:#e4e6ec"></div>
<div style="left:35px;top:316px;width:1px;height:90px;background:#e4e6ec"></div>
<div style="left:64px;top:316px;width:1px;height:90px;background:#e4e6ec"></div>
<div style="left:236px;top:316px;width:1px;height:90px;background:#e4e6ec"></div>
<div style="left:290px;top:316px;width:1px;height:90px;background:#e4e6ec"></div>
<div style="left:379px;top:316px;width:1px;height:90px;background:#e4e6ec"></div>
<div style="left:433px;top:316px;width:1px;height:90px;background:#e4e6ec"></div>
<div style="left:500px;top:316px;width:1px;height:90px;background:#e4e6ec"></div>
<div style="left:544px;top:316px;width:1px;height:90px;background:#e4e6ec"></div>
<div style="left:622px;top:316px;width:1px;height:90px;background:#e4e6ec"></div>
<div style="left:697px;top:316px;width:1px;height:90px;background:#e4e6ec"></div>
<div style="left:759px;top:316px;width:1px;height:90px;background:#e4e6ec"></div>
<div style="left:818px;top:316px;width:1px;height:90px;background:#e4e6ec"></div>
<div style="left:889px;top:316px;width:1px;height:90px;background:#e4e6ec"></div>
<div style="left:987px;top:316px;width:1px;height:90px;background:#e4e6ec"></div>
<div style="left:7px;top:316px;width:28px;height:17px;background:#ee7543"></div>
<div class="t" style="left:9px;top:289px;font-size:12px;line-height:13px;letter-spacing:-0.6px;width:26px;overflow:hidden;">Rodz<br>towaru</div>
<div class="t" style="left:38px;top:289px;font-size:12px;line-height:13px;letter-spacing:-0.6px;">Mag</div>
<div class="t" style="left:67px;top:289px;font-size:12px;line-height:13px;letter-spacing:-0.6px;">Nazwa towaru</div>
<div class="t" style="left:240px;top:289px;font-size:12px;line-height:13px;letter-spacing:-0.6px;">Kod<br>towaru</div>
<div class="t" style="left:293px;top:289px;font-size:12px;line-height:13px;letter-spacing:-0.6px;">Rozmiar</div>
<div class="t" style="left:382px;top:289px;font-size:12px;line-height:13px;letter-spacing:-0.6px;width:51px;overflow:hidden;">Gramatura</div>
<div class="t" style="left:435px;top:289px;font-size:12px;line-height:13px;letter-spacing:-0.6px;">Symbol rodz.<br>materiału</div>
<div class="t" style="left:502px;top:289px;font-size:12px;line-height:13px;letter-spacing:-0.6px;">Symbol<br>tektury</div>
<div class="t" style="left:547px;top:289px;font-size:12px;line-height:13px;letter-spacing:-0.6px;">Cena<br>zamówienia</div>
<div class="t" style="left:624px;top:289px;font-size:12px;line-height:13px;letter-spacing:-0.6px;">Ilość<br>zamówienia</div>
<div class="t" style="left:699px;top:289px;font-size:12px;line-height:13px;letter-spacing:-0.6px;">Stan<br>minimalny</div>
<div class="t" style="left:762px;top:289px;font-size:12px;line-height:13px;letter-spacing:-0.6px;width:56px;overflow:hidden;">Stan<br>magazynowy</div>
<div class="t" style="left:821px;top:289px;font-size:12px;line-height:13px;letter-spacing:-0.6px;">Data ustalona</div>
<div class="t" style="left:891px;top:289px;font-size:12px;line-height:13px;letter-spacing:-0.6px;">Data potwierdzona</div>
<div class="t" style="left:9px;top:319px;font-size:12px;line-height:13px;letter-spacing:-0.6px;color:#ffffff;">S</div>
<div class="t" style="left:38px;top:319px;font-size:12px;line-height:13px;letter-spacing:-0.6px;">MG</div>
<div class="t" style="left:67px;top:319px;font-size:12px;line-height:13px;font-weight:bold;letter-spacing:0.2px;">SUROWIEC NR 1</div>
<div class="t" style="left:239px;top:319px;font-size:12px;line-height:13px;letter-spacing:-0.6px;">SUR1</div>
<div class="t" style="left:293px;top:319px;font-size:12px;line-height:13px;letter-spacing:-0.6px;">0 x 0 x 0</div>
<div class="t" style="left:379px;top:319px;font-size:12px;line-height:13px;letter-spacing:-0.6px;width:53px;text-align:right;">0</div>
<div class="t" style="left:502px;top:319px;font-size:12px;line-height:13px;letter-spacing:-0.6px;">&lt;N/D&gt;</div>
<div class="t" style="left:544px;top:319px;font-size:12px;line-height:13px;font-weight:bold;letter-spacing:0.2px;width:77px;text-align:right;letter-spacing:0.8px;">3,00</div>
<div class="t" style="left:622px;top:319px;font-size:12px;line-height:13px;font-weight:bold;letter-spacing:0.2px;width:74px;text-align:right;letter-spacing:0.8px;">100</div>
<div class="t" style="left:697px;top:319px;font-size:12px;line-height:13px;letter-spacing:-0.6px;width:61px;text-align:right;">0</div>
<div class="t" style="left:759px;top:319px;font-size:12px;line-height:13px;font-weight:bold;letter-spacing:0.2px;width:58px;text-align:right;letter-spacing:0.8px;">88</div>
<div class="t" style="left:820px;top:319px;font-size:12px;line-height:13px;letter-spacing:-0.6px;">07.08.2017</div>
<div class="t" style="left:891px;top:319px;font-size:12px;line-height:13px;letter-spacing:-0.6px;">08.08.2017</div>
<div class="t" style="left:9px;top:337px;font-size:12px;line-height:13px;letter-spacing:-0.6px;">S</div>
<div class="t" style="left:38px;top:337px;font-size:12px;line-height:13px;letter-spacing:-0.6px;">MG</div>
<div class="t" style="left:67px;top:337px;font-size:12px;line-height:13px;font-weight:bold;letter-spacing:0.2px;">SUROWIEC NR 2</div>
<div class="t" style="left:239px;top:337px;font-size:12px;line-height:13px;letter-spacing:-0.6px;">SUR 2</div>
<div class="t" style="left:293px;top:337px;font-size:12px;line-height:13px;letter-spacing:-0.6px;">0 x 0 x 0</div>
<div class="t" style="left:379px;top:337px;font-size:12px;line-height:13px;letter-spacing:-0.6px;width:53px;text-align:right;">0</div>
<div class="t" style="left:502px;top:337px;font-size:12px;line-height:13px;letter-spacing:-0.6px;">&lt;N/D&gt;</div>
<div class="t" style="left:544px;top:337px;font-size:12px;line-height:13px;font-weight:bold;letter-spacing:0.2px;width:77px;text-align:right;letter-spacing:0.8px;">1,00</div>
<div class="t" style="left:622px;top:337px;font-size:12px;line-height:13px;font-weight:bold;letter-spacing:0.2px;width:74px;text-align:right;letter-spacing:0.8px;">100</div>
<div class="t" style="left:697px;top:337px;font-size:12px;line-height:13px;letter-spacing:-0.6px;width:61px;text-align:right;">0</div>
<div class="t" style="left:759px;top:337px;font-size:12px;line-height:13px;font-weight:bold;letter-spacing:0.2px;width:58px;text-align:right;letter-spacing:0.8px;">166</div>
<div class="t" style="left:820px;top:337px;font-size:12px;line-height:13px;letter-spacing:-0.6px;">07.08.2017</div>
<div class="t" style="left:891px;top:337px;font-size:12px;line-height:13px;letter-spacing:-0.6px;">09.08.2017</div>
<div class="t" style="left:9px;top:355px;font-size:12px;line-height:13px;letter-spacing:-0.6px;">S</div>
<div class="t" style="left:38px;top:355px;font-size:12px;line-height:13px;letter-spacing:-0.6px;">MG</div>
<div class="t" style="left:67px;top:355px;font-size:12px;line-height:13px;font-weight:bold;letter-spacing:0.2px;">SUROWIEC NR 2</div>
<div class="t" style="left:239px;top:355px;font-size:12px;line-height:13px;letter-spacing:-0.6px;">SUR 2</div>
<div class="t" style="left:293px;top:355px;font-size:12px;line-height:13px;letter-spacing:-0.6px;">0 x 0 x 0</div>
<div class="t" style="left:379px;top:355px;font-size:12px;line-height:13px;letter-spacing:-0.6px;width:53px;text-align:right;">0</div>
<div class="t" style="left:502px;top:355px;font-size:12px;line-height:13px;letter-spacing:-0.6px;">&lt;N/D&gt;</div>
<div class="t" style="left:544px;top:355px;font-size:12px;line-height:13px;font-weight:bold;letter-spacing:0.2px;width:77px;text-align:right;letter-spacing:0.8px;">1,00</div>
<div class="t" style="left:622px;top:355px;font-size:12px;line-height:13px;font-weight:bold;letter-spacing:0.2px;width:74px;text-align:right;letter-spacing:0.8px;">100</div>
<div class="t" style="left:697px;top:355px;font-size:12px;line-height:13px;letter-spacing:-0.6px;width:61px;text-align:right;">0</div>
<div class="t" style="left:759px;top:355px;font-size:12px;line-height:13px;font-weight:bold;letter-spacing:0.2px;width:58px;text-align:right;letter-spacing:0.8px;">166</div>
<div class="t" style="left:820px;top:355px;font-size:12px;line-height:13px;letter-spacing:-0.6px;">07.08.2017</div>
<div class="t" style="left:891px;top:355px;font-size:12px;line-height:13px;letter-spacing:-0.6px;">08.08.2017</div>
<div class="t" style="left:9px;top:373px;font-size:12px;line-height:13px;letter-spacing:-0.6px;">S</div>
<div class="t" style="left:38px;top:373px;font-size:12px;line-height:13px;letter-spacing:-0.6px;">MG</div>
<div class="t" style="left:67px;top:373px;font-size:12px;line-height:13px;font-weight:bold;letter-spacing:0.2px;">SUROWIEC NR 3</div>
<div class="t" style="left:239px;top:373px;font-size:12px;line-height:13px;letter-spacing:-0.6px;">SUR 3</div>
<div class="t" style="left:293px;top:373px;font-size:12px;line-height:13px;letter-spacing:-0.6px;">0 x 0 x 0</div>
<div class="t" style="left:379px;top:373px;font-size:12px;line-height:13px;letter-spacing:-0.6px;width:53px;text-align:right;">0</div>
<div class="t" style="left:502px;top:373px;font-size:12px;line-height:13px;letter-spacing:-0.6px;">&lt;N/D&gt;</div>
<div class="t" style="left:544px;top:373px;font-size:12px;line-height:13px;font-weight:bold;letter-spacing:0.2px;width:77px;text-align:right;letter-spacing:0.8px;">3,00</div>
<div class="t" style="left:622px;top:373px;font-size:12px;line-height:13px;font-weight:bold;letter-spacing:0.2px;width:74px;text-align:right;letter-spacing:0.8px;">100</div>
<div class="t" style="left:697px;top:373px;font-size:12px;line-height:13px;letter-spacing:-0.6px;width:61px;text-align:right;">0</div>
<div class="t" style="left:759px;top:373px;font-size:12px;line-height:13px;font-weight:bold;letter-spacing:0.2px;width:58px;text-align:right;letter-spacing:0.8px;">0</div>
<div class="t" style="left:820px;top:373px;font-size:12px;line-height:13px;letter-spacing:-0.6px;">08.08.2017</div>
<div class="t" style="left:891px;top:373px;font-size:12px;line-height:13px;letter-spacing:-0.6px;">16.08.2017</div>
<div class="t" style="left:9px;top:391px;font-size:12px;line-height:13px;letter-spacing:-0.6px;">P</div>
<div class="t" style="left:38px;top:391px;font-size:12px;line-height:13px;letter-spacing:-0.6px;">MG</div>
<div class="t" style="left:67px;top:391px;font-size:12px;line-height:13px;font-weight:bold;letter-spacing:0.2px;">PRODUKT NR 4</div>
<div class="t" style="left:239px;top:391px;font-size:12px;line-height:13px;letter-spacing:-0.6px;">PROD 4</div>
<div class="t" style="left:293px;top:391px;font-size:12px;line-height:13px;letter-spacing:-0.6px;">0 x 0 x 0</div>
<div class="t" style="left:379px;top:391px;font-size:12px;line-height:13px;letter-spacing:-0.6px;width:53px;text-align:right;">0</div>
<div class="t" style="left:502px;top:391px;font-size:12px;line-height:13px;letter-spacing:-0.6px;">&lt;N/D&gt;</div>
<div class="t" style="left:544px;top:391px;font-size:12px;line-height:13px;font-weight:bold;letter-spacing:0.2px;width:77px;text-align:right;letter-spacing:0.8px;">3,00</div>
<div class="t" style="left:622px;top:391px;font-size:12px;line-height:13px;font-weight:bold;letter-spacing:0.2px;width:74px;text-align:right;letter-spacing:0.8px;">50</div>
<div class="t" style="left:697px;top:391px;font-size:12px;line-height:13px;letter-spacing:-0.6px;width:61px;text-align:right;">0</div>
<div class="t" style="left:759px;top:391px;font-size:12px;line-height:13px;font-weight:bold;letter-spacing:0.2px;width:58px;text-align:right;letter-spacing:0.8px;">67</div>
<div class="t" style="left:820px;top:391px;font-size:12px;line-height:13px;letter-spacing:-0.6px;">07.08.2017</div>
<div class="t" style="left:891px;top:391px;font-size:12px;line-height:13px;letter-spacing:-0.6px;">07.08.2017</div>
<div style="left:1008px;top:295px;width:17px;height:119px;background:#c4c8dc;"></div>
<div style="left:1008px;top:287px;width:17px;height:16px;box-sizing:border-box;border:1px solid #b4bad4;border-radius:4px;background:linear-gradient(#f0f1f8,#dcdfec);"></div>
<svg style="left:1008px;top:287px" width="17" height="16" viewBox="0 0 17 16"><path d="M5.0 9.5 L8.5 6.0 L12.0 9.5 Z" fill="#4a5488"/></svg>
<div style="left:1008px;top:406px;width:17px;height:16px;box-sizing:border-box;border:1px solid #b4bad4;border-radius:4px;background:linear-gradient(#f0f1f8,#dcdfec);"></div>
<svg style="left:1008px;top:406px" width="17" height="16" viewBox="0 0 17 16"><path d="M5.0 6.5 L8.5 10.0 L12.0 6.5 Z" fill="#4a5488"/></svg>
<div style="left:1008px;top:304px;width:17px;height:16px;box-sizing:border-box;border:1px solid #b4bad4;border-radius:4px;background:linear-gradient(#f0f1f8,#dcdfec);"></div>
<svg style="left:1008px;top:304px" width="17" height="16" viewBox="0 0 17 16"><path d="M5.0 7.0 H12.0 M5.0 9.5 H12.0" stroke="#a8aec8" stroke-width="1"/></svg>
<div style="left:7px;top:422px;width:1018px;height:74px;background:linear-gradient(90deg,#ffffff,#c3c3c3);"></div>
<div style="left:7px;top:422px;width:1018px;height:1px;background:#a0a0a0"></div>
<div style="left:7px;top:495px;width:1018px;height:1px;background:#a0a0a0"></div>
<div style="left:7px;top:422px;width:1px;height:74px;background:#a0a0a0"></div>
<div class="t" style="left:13px;top:433px;font-size:12px;line-height:13px;color:#505a88;letter-spacing:-0.5px;">Warunki techniczne:</div>
<div class="t" style="left:86px;top:456px;font-size:12px;line-height:13px;color:#505a88;letter-spacing:-0.5px;">Opis:</div>
<div class="t" style="left:42px;top:478px;font-size:12px;line-height:13px;color:#505a88;letter-spacing:-0.5px;">Poddostawca:</div>
<div style="left:115px;top:429px;width:699px;height:19px;box-sizing:border-box;border:1px solid #6a6a6a;background:#ffffff;"></div>
<div style="left:115px;top:452px;width:699px;height:19px;box-sizing:border-box;border:1px solid #6a6a6a;background:#ffffff;"></div>
<div class="t" style="left:819px;top:429px;font-size:12px;line-height:13px;color:#505a88;letter-spacing:-0.5px;letter-spacing:-0.6px;">Dokumenty PZ</div>
<div style="left:902px;top:428px;width:101px;height:46px;box-sizing:border-box;border:1px solid #6a6a6a;background:#ffffff;"></div>
<div class="t" style="left:904px;top:431px;font-size:12px;line-height:13px;letter-spacing:-0.6px;">0002/17/S</div>
<div style="left:1004px;top:437px;width:16px;height:29px;background:#d0d3e2;"></div>
<div style="left:1004px;top:429px;width:16px;height:16px;box-sizing:border-box;border:1px solid #c4c8dc;border-radius:4px;background:linear-gradient(#f0f1f8,#e2e4ee);"></div>
<svg style="left:1004px;top:429px" width="16" height="16" viewBox="0 0 16 16"><path d="M4.5 9.5 L8.0 6.0 L11.5 9.5 Z" fill="#9aa0c0"/></svg>
<div style="left:1004px;top:458px;width:16px;height:16px;box-sizing:border-box;border:1px solid #c4c8dc;border-radius:4px;background:linear-gradient(#f0f1f8,#e2e4ee);"></div>
<svg style="left:1004px;top:458px" width="16" height="16" viewBox="0 0 16 16"><path d="M4.5 6.5 L8.0 10.0 L11.5 6.5 Z" fill="#9aa0c0"/></svg>
<div style="left:7px;top:496px;width:1018px;height:21px;background:linear-gradient(#f4f5f8,#e4e6ee 40%,#dadde6);"></div>
<div style="left:7px;top:496px;width:1018px;height:1px;background:#ffffff"></div>
<div class="t" style="left:7px;top:502px;font-size:12px;line-height:15px;color:#1a1020;">F8 - Sortowanie</div>
<svg style="left:1010px;top:504px" width="11" height="11" viewBox="0 0 11 11"><path d="M10 1 V10 H1 Z" fill="#4a5488"/></svg>
</body></html>
